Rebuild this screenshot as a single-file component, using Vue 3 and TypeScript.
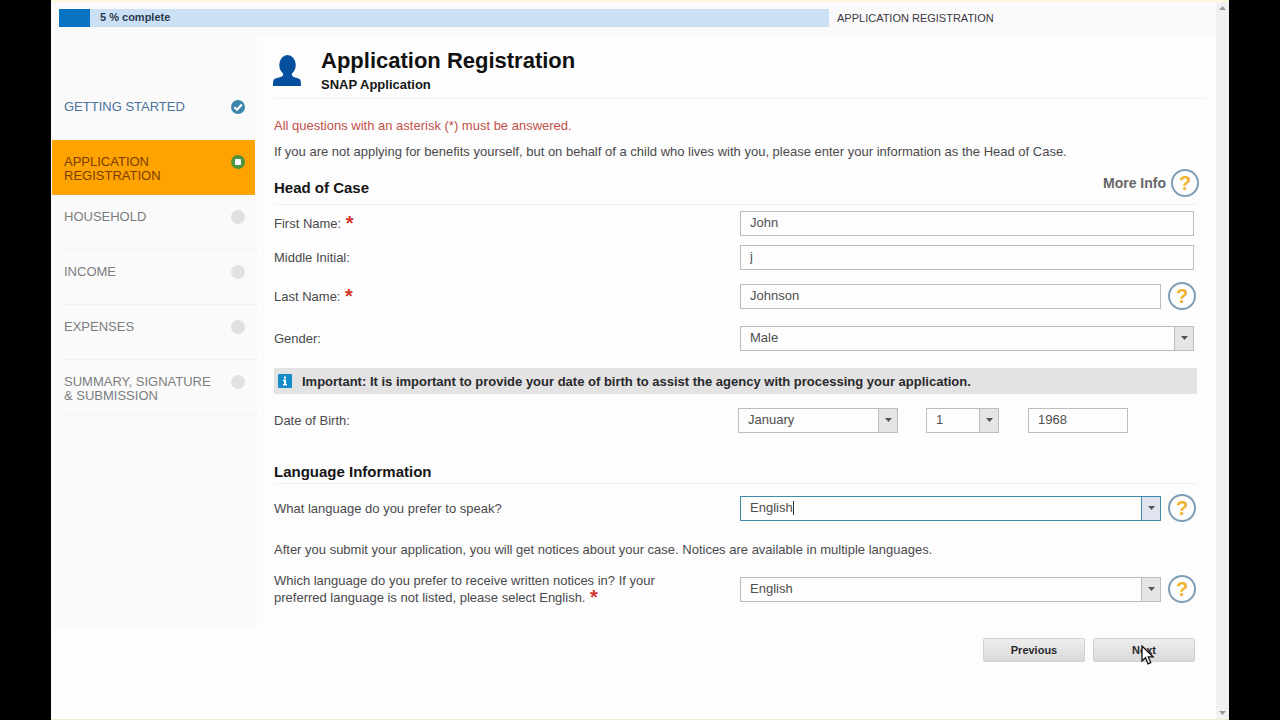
<script setup lang="ts">
import { ref } from 'vue'

type StepState = 'done' | 'current' | 'pending'

interface Step {
  label: string
  state: StepState
}

const steps: Step[] = [
  { label: 'GETTING STARTED', state: 'done' },
  { label: 'APPLICATION REGISTRATION', state: 'current' },
  { label: 'HOUSEHOLD', state: 'pending' },
  { label: 'INCOME', state: 'pending' },
  { label: 'EXPENSES', state: 'pending' },
  { label: 'SUMMARY, SIGNATURE & SUBMISSION', state: 'pending' },
]

const percent = 5
const firstName = ref('John')
const middleInitial = ref('j')
const lastName = ref('Johnson')
const gender = ref('Male')
const month = ref('January')
const day = ref('1')
const year = ref('1968')
const spoken = ref('English')
const written = ref('English')
</script>

<template>
  <div class="stage">
    <div class="window">
      <div class="page">
        <header class="topbar">
          <div class="progress">
            <div class="progress-fill"></div>
            <span class="progress-text">{{ percent }} % complete</span>
          </div>
          <span class="topbar-title">APPLICATION REGISTRATION</span>
        </header>

        <div class="columns">
          <nav class="sidebar">
            <a v-for="step in steps" :key="step.label" href="#" class="step" :class="step.state">
              <span class="step-label">{{ step.label }}</span>
              <svg class="step-icon" viewBox="0 0 14 14" aria-hidden="true">
                <template v-if="step.state === 'done'">
                  <circle cx="7" cy="7" r="7" fill="#3c86ad" />
                  <path d="M3.4 7.2 6 9.7 10.8 4.6" fill="none" stroke="#fff" stroke-width="2.2" />
                </template>
                <template v-else-if="step.state === 'current'">
                  <circle cx="7" cy="7" r="7" fill="#4c9440" />
                  <rect x="4" y="4" width="6" height="6" rx="1" fill="#fff" />
                </template>
                <circle v-else cx="7" cy="7" r="7" fill="#e1e1e1" />
              </svg>
            </a>
          </nav>

          <main class="content">
            <div class="title-row">
              <svg class="person" viewBox="0 0 28 31" aria-hidden="true">
                <g fill="#064f9f">
                  <ellipse cx="14.5" cy="10" rx="8.3" ry="10" />
                  <path d="M9 15H20L18.800 19.500C18.800 22.500 24 22.500 26.500 24 28 25 28 27 28 31H0C0 27 0 25 1.500 24 4 22.500 10.200 22.500 10.200 19.500Z" />
                </g>
              </svg>
              <div>
                <h1>Application Registration</h1>
                <p class="subtitle">SNAP Application</p>
              </div>
            </div>

            <p class="required-note">All questions with an asterisk (*) must be answered.</p>
            <p class="intro">If you are not applying for benefits yourself, but on behalf of a child who lives with you, please enter your information as the Head of Case.</p>

            <div class="section-head">
              <h2>Head of Case</h2>
              <div class="more">
                <span>More Info</span>
                <button type="button" class="help" aria-label="More Info">?</button>
              </div>
            </div>

            <div class="row short">
              <label for="first">First Name: <span class="star">*</span></label>
              <div class="field wide"><input id="first" v-model="firstName" type="text" /></div>
            </div>
            <div class="row short">
              <label for="middle">Middle Initial:</label>
              <div class="field wide"><input id="middle" v-model="middleInitial" type="text" /></div>
            </div>
            <div class="row">
              <label for="last">Last Name: <span class="star">*</span></label>
              <div class="field">
                <input id="last" v-model="lastName" type="text" />
                <button type="button" class="help" aria-label="Help with last name">?</button>
              </div>
            </div>
            <div class="row mid">
              <label for="gender">Gender:</label>
              <div class="field wide">
                <div class="select">
                  <select id="gender" v-model="gender">
                    <option>Male</option>
                    <option>Female</option>
                  </select>
                  <span class="drop"><svg viewBox="0 0 7 4"><path d="M0 0h7L3.500 4z" /></svg></span>
                </div>
              </div>
            </div>

            <div class="notice">
              <svg class="info" viewBox="0 0 14 14" aria-hidden="true">
                <rect width="14" height="14" rx="1" fill="#168cc8" />
                <path d="M6 2.500h2v2H6zM5 5.500h3V10h1v1.500H5V10h1V7H5z" fill="#fff" />
              </svg>
              <strong>Important: It is important to provide your date of birth to assist the agency with processing your application.</strong>
            </div>

            <div class="row birth">
              <label for="month">Date of Birth:</label>
              <div class="dates">
                <div class="select month">
                  <select id="month" v-model="month">
                    <option>January</option>
                    <option>February</option>
                  </select>
                  <span class="drop"><svg viewBox="0 0 7 4"><path d="M0 0h7L3.500 4z" /></svg></span>
                </div>
                <div class="select day">
                  <select v-model="day" aria-label="Day of birth">
                    <option>1</option>
                    <option>2</option>
                  </select>
                  <span class="drop"><svg viewBox="0 0 7 4"><path d="M0 0h7L3.500 4z" /></svg></span>
                </div>
                <input v-model="year" class="year" type="text" aria-label="Year of birth" />
              </div>
            </div>

            <div class="section-head language"><h2>Language Information</h2></div>

            <div class="row tall">
              <label for="spoken">What language do you prefer to speak?</label>
              <div class="field">
                <div class="select active">
                  <select id="spoken" v-model="spoken">
                    <option>English</option>
                    <option>Spanish</option>
                  </select>
                  <span class="caret"></span>
                  <span class="drop"><svg viewBox="0 0 7 4"><path d="M0 0h7L3.500 4z" /></svg></span>
                </div>
                <button type="button" class="help" aria-label="Help with spoken language">?</button>
              </div>
            </div>

            <p class="after">After you submit your application, you will get notices about your case. Notices are available in multiple languages.</p>

            <div class="row tall">
              <label for="written" class="long">Which language do you prefer to receive written notices in? If your preferred language is not listed, please select English. <span class="star">*</span></label>
              <div class="field">
                <div class="select">
                  <select id="written" v-model="written">
                    <option>English</option>
                    <option>Spanish</option>
                  </select>
                  <span class="drop"><svg viewBox="0 0 7 4"><path d="M0 0h7L3.500 4z" /></svg></span>
                </div>
                <button type="button" class="help" aria-label="Help with notice language">?</button>
              </div>
            </div>

            <div class="actions">
              <button type="button" class="action">Previous</button>
              <button type="button" class="action">
                Next
                <svg class="pointer" viewBox="0 0 13 20" aria-hidden="true">
                  <path d="M1 1v15l3.500-3.300L7 18.800l2.700-1.200L7.200 11.800H12z" fill="#fff" stroke="#111" stroke-width="1.300" />
                </svg>
              </button>
            </div>
          </main>
        </div>
      </div>
      <div class="scrollbar" aria-hidden="true">
        <svg viewBox="0 0 7 4"><path d="M0 4h7L3.500 0z" /></svg>
        <svg viewBox="0 0 7 4"><path d="M0 0h7L3.500 4z" /></svg>
      </div>
    </div>
  </div>
</template>

<style>
body {
  margin: 0;
  background: #000;
}
</style>

<style scoped>
* {
  box-sizing: border-box;
}
.stage {
  min-height: 100vh;
  padding: 0 51px;
  display: flex;
  background: #000;
  font-family: "Liberation Sans", Arial, sans-serif;
  font-size: 13px;
  line-height: 17px;
  color: #4a4a4c;
}
.window {
  flex: 1;
  display: flex;
  background: #fdfdfd;
  border-top: 2px solid #fdf5dc;
  border-bottom: 1px solid #f0edc8;
}
.page {
  flex: 1;
  min-width: 0;
}
p,
h1,
h2 {
  margin: 0;
}
.topbar {
  height: 33px;
  padding: 7px 8px 0;
  display: flex;
  gap: 8px;
  background: #fafafb;
}
.progress {
  flex: 0 1 770px;
  height: 18px;
  display: flex;
  gap: 10px;
  background: #cbe0f4;
}
.progress-fill {
  width: 31px;
  background: #0873c2;
}
.progress-text {
  font-size: 11px;
  font-weight: bold;
  line-height: 17px;
  color: #29394e;
}
.topbar-title {
  font-size: 11px;
  line-height: 18px;
  color: #3a3840;
}
.columns {
  display: flex;
  align-items: flex-start;
}
.sidebar {
  flex: 0 0 206px;
  min-height: 592px;
  padding-top: 50px;
  background: #fafafb;
}
.step {
  height: 55px;
  margin-left: 12px;
  padding: 15px 12px 0 1px;
  display: flex;
  border-bottom: 1px solid #f1f1f1;
  line-height: 14px;
  color: #7d7d7d;
  text-decoration: none;
}
.step-label {
  width: 150px;
  margin-right: 17px;
}
.step-icon {
  width: 14px;
  height: 14px;
}
.step.done {
  color: #4b739c;
  border-color: #fafafb;
}
.step.current {
  margin: 0 2px 0 1px;
  padding: 15px 10px 0 12px;
  background: #ffa300;
  border-color: #f5a623;
  color: #7a3d05;
}
.content {
  flex: 1;
  min-width: 0;
  padding: 0 10px 0 17px;
}
.title-row {
  height: 64px;
  display: flex;
  gap: 20px;
  padding-top: 12px;
  border-bottom: 1px solid #f0f0f0;
}
.person {
  width: 28px;
  height: 31px;
  margin: 8px 0 0 -1px;
}
h1 {
  font-size: 22px;
  line-height: 28px;
  color: #111;
}
.subtitle {
  font-size: 13px;
  font-weight: bold;
  line-height: 20px;
  color: #151515;
}
.required-note {
  padding-top: 18px;
  color: #c2504a;
}
.intro {
  padding-top: 9px;
}
.section-head {
  height: 45px;
  margin-right: 9px;
  display: flex;
  justify-content: space-between;
  align-items: flex-end;
  padding-bottom: 7px;
  border-bottom: 1px solid #f0f0f0;
}
.section-head.language {
  height: 38px;
  padding-bottom: 2px;
}
h2 {
  font-size: 15px;
  line-height: 18px;
  color: #151515;
}
.more {
  display: flex;
  align-items: center;
  gap: 5px;
  margin-right: -2px;
  font-size: 14px;
  font-weight: bold;
  color: #666;
}
.row {
  min-height: 44px;
  display: grid;
  grid-template-columns: 1fr 1fr;
  align-items: center;
}
.section-head + .row.short {
  margin-top: 1px;
}
.row.short {
  min-height: 34px;
}
.row.mid {
  min-height: 40px;
}
.row.birth {
  min-height: 52px;
}
.row.tall {
  min-height: 48px;
}
.long {
  max-width: 400px;
}
.star {
  margin-left: 1px;
  font-size: 20px;
  font-weight: bold;
  line-height: 12px;
  vertical-align: -2px;
  color: #d6342b;
}
.field {
  display: flex;
  align-items: center;
  gap: 7px;
  padding-right: 10px;
}
.field.wide {
  padding-right: 12px;
}
input,
select {
  flex: 1;
  min-width: 0;
  width: 100%;
  height: 25px;
  margin: 0;
  padding: 0 9px 1px;
  border: 1px solid #bdbdbd;
  border-radius: 0;
  background: #fdfdfd;
  font: inherit;
  color: #4f4f50;
  appearance: none;
  outline: none;
}
.select {
  flex: 1;
  position: relative;
}
.select select {
  display: block;
}
.drop {
  position: absolute;
  top: 1px;
  right: 1px;
  bottom: 1px;
  width: 19px;
  display: flex;
  align-items: center;
  justify-content: center;
  border-left: 1px solid #bdbdbd;
  background: #e5e5e6;
  pointer-events: none;
}
.drop svg {
  width: 7px;
  height: 4px;
  fill: #555;
}
.active select,
.active .drop {
  border-color: #3f8aa8;
}
.active .drop {
  background: #dfe4ee;
}
.caret {
  position: absolute;
  top: 5px;
  left: 53px;
  width: 1px;
  height: 14px;
  background: #333;
}
.help {
  flex: 0 0 28px;
  height: 28px;
  padding: 0;
  border: 2px solid #7f9fb8;
  border-radius: 50%;
  background: #fdfdfd;
  font: bold 20px/24px "Liberation Sans", Arial, sans-serif;
  color: #f0b32e;
}
.notice {
  min-height: 26px;
  margin: 10px 9px 0 0;
  padding: 0 4px;
  display: flex;
  align-items: center;
  gap: 10px;
  background: #e4e3e4;
  color: #29292c;
}
.info {
  width: 14px;
  height: 14px;
}
.dates {
  display: flex;
  margin-left: -2px;
}
.month {
  flex: 0 0 160px;
  margin-right: 28px;
}
.day {
  flex: 0 0 73px;
  margin-right: 29px;
}
.year {
  flex: 0 0 100px;
}
.after {
  padding: 9px 0 7px;
}
.actions {
  display: flex;
  justify-content: flex-end;
  gap: 8px;
  margin: 25px 11px 0 0;
}
.action {
  position: relative;
  width: 102px;
  height: 24px;
  padding: 0;
  border: 1px solid #d2d2d2;
  border-radius: 2px;
  background: linear-gradient(#eeeeee, #dadada);
  font: bold 11px/20px "Liberation Sans", Arial, sans-serif;
  color: #29292c;
}
.pointer {
  position: absolute;
  top: 6px;
  left: 47px;
  width: 13px;
  height: 20px;
}
.scrollbar {
  flex: 0 0 13px;
  padding: 4px 2px;
  display: flex;
  flex-direction: column;
  justify-content: space-between;
  align-items: center;
  background: #f1f1f2;
}
.scrollbar svg {
  width: 7px;
  height: 4px;
  fill: #999;
}
</style>
